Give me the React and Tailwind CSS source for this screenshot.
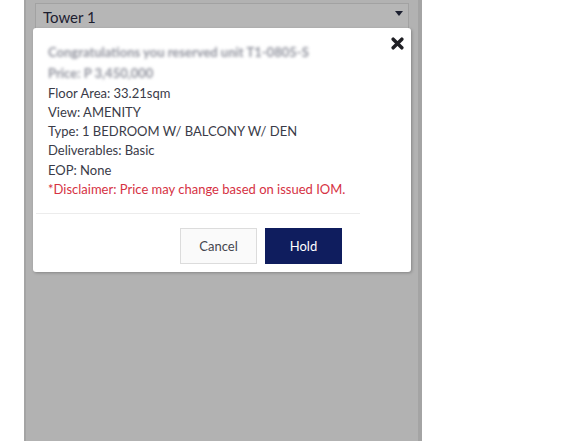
import React from 'react';

const details = [
  'Floor Area: 33.21sqm',
  'View: AMENITY',
  'Type: 1 BEDROOM W/ BALCONY W/ DEN',
  'Deliverables: Basic',
  'EOP: None',
];

const HoldModal = () => (
  <div className="absolute left-[7px] top-[28px] w-[378px] h-[244px] bg-white rounded-[3px] shadow-[1px_1px_3px_rgba(0,0,0,0.25)]">
    <button className="absolute left-[358px] top-[9px] w-[13px] h-[13px] text-[#1f1f24]" aria-label="Close">
      <svg viewBox="0 0 12 12" width="13" height="13">
        <path d="M2 2 L10 10 M10 2 L2 10" stroke="currentColor" strokeWidth="3.2" strokeLinecap="round" />
      </svg>
    </button>

    <div className="pt-[15px] pl-[15px] text-[13px] leading-[19.3px] text-[#3a3b48]">
      <p className="blur-[1.4px] text-[#8f919c] font-bold select-none">Congratulations you reserved unit T1-0805-S</p>
      <p className="blur-[1.4px] text-[#8f919c] font-bold select-none mt-[2px]">Price: P 3,450,000</p>
      {details.map((line) => (
        <p key={line}>{line}</p>
      ))}
      <p className="text-[#d63243]">*Disclaimer: Price may change based on issued IOM.</p>
    </div>

    <div className="w-[324px] ml-[3px] mt-[14px] border-t border-[#ececec] flex justify-end gap-2 pt-[14px] pr-[18px]">
      <button className="w-[77px] h-[36px] bg-[#fafafa] border border-[#dcdcdc] text-[13px] text-[#45464f]">
        Cancel
      </button>
      <button className="w-[77px] h-[36px] bg-[#0f1d5e] text-[13px] text-white">
        Hold
      </button>
    </div>
  </div>
);

export default function App() {
  return (
    <div className="w-[576px] h-[441px] bg-white flex font-['Lato',sans-serif]">
      <div className="ml-6 w-[398px] h-full bg-[#b2b2b2] border-l-2 border-r-[4px] border-[#a4a4a4] relative pt-[3px] px-[9px]">
        <div className="h-[28px] border border-[#a2a2a2] bg-[#b6b6b6] flex items-center justify-between pl-[7px] pr-[5px]">
          <span className="text-[15px] text-[#1c2030]">Tower 1</span>
          <svg viewBox="0 0 8 5" width="8" height="5" className="text-[#1c2030] mt-[-8px]">
            <path d="M0 0 H8 L4 5 Z" fill="currentColor" />
          </svg>
        </div>
        <HoldModal />
      </div>
    </div>
  );
}
